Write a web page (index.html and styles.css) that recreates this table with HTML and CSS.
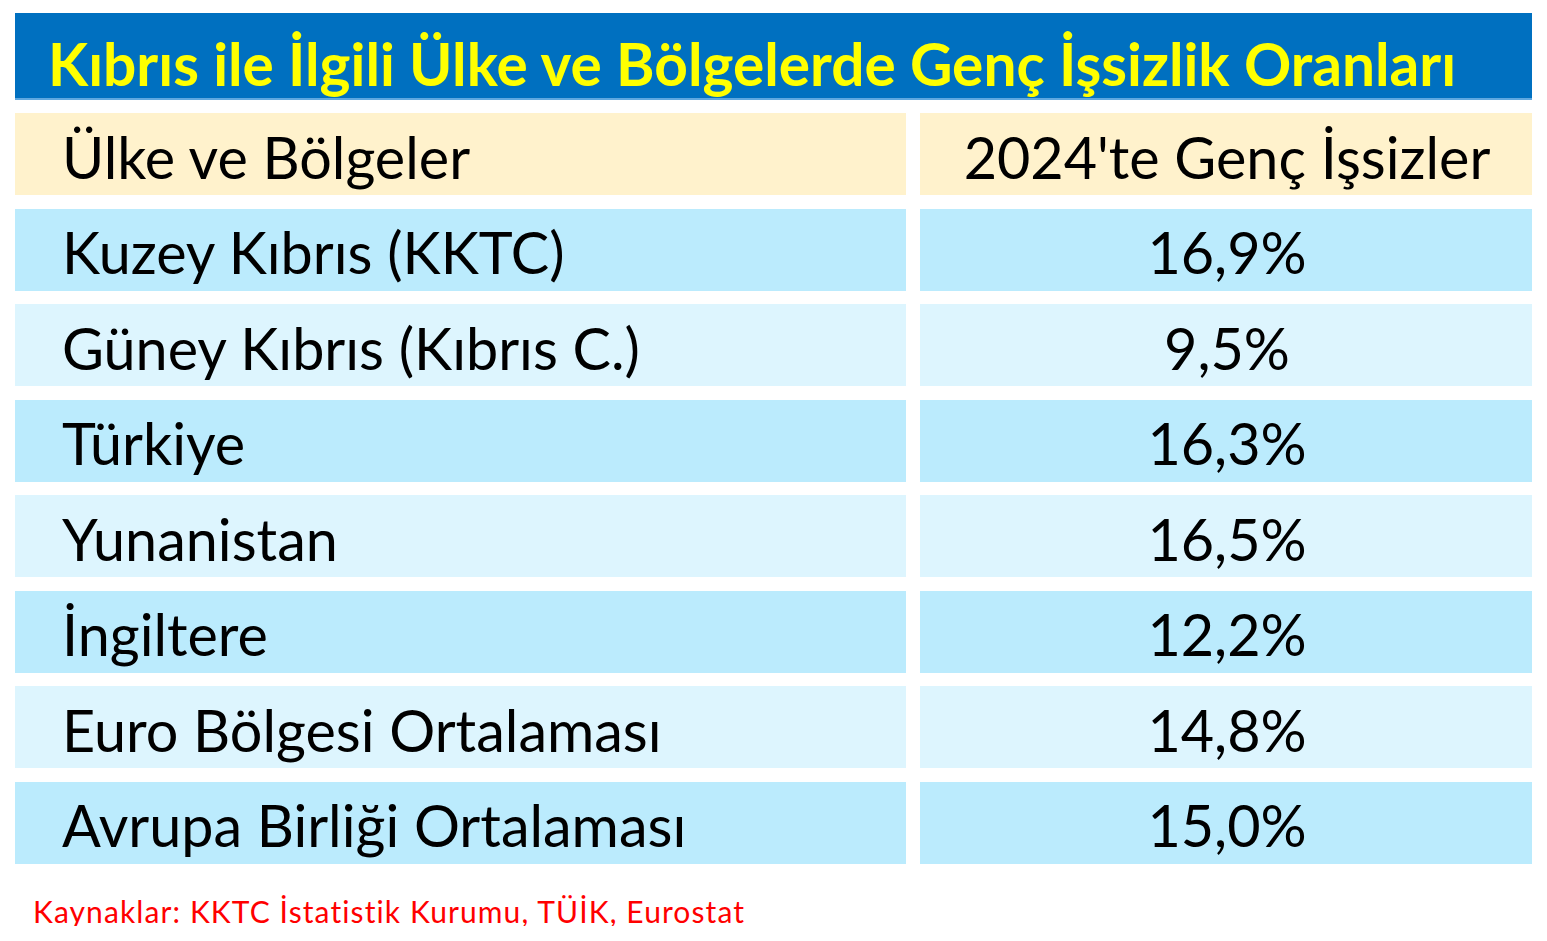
FILE: index.html
```html
<!DOCTYPE html>
<html lang="tr">
<head>
<meta charset="utf-8">
<title>Genç İşsizlik Oranları</title>
<link rel="stylesheet" href="styles.css">
</head>
<body>
<main class="sheet">
  <h1 class="title">Kıbrıs ile İlgili Ülke ve Bölgelerde Genç İşsizlik Oranları</h1>
  <div class="table">
    <div class="cell head name">Ülke ve Bölgeler</div>
    <div class="cell head value">2024'te Genç İşsizler</div>

    <div class="cell dark name">Kuzey Kıbrıs (KKTC)</div>
    <div class="cell dark value">16,9%</div>

    <div class="cell light name">Güney Kıbrıs (Kıbrıs C.)</div>
    <div class="cell light value">9,5%</div>

    <div class="cell dark name">Türkiye</div>
    <div class="cell dark value">16,3%</div>

    <div class="cell light name">Yunanistan</div>
    <div class="cell light value">16,5%</div>

    <div class="cell dark name">İngiltere</div>
    <div class="cell dark value">12,2%</div>

    <div class="cell light name">Euro Bölgesi Ortalaması</div>
    <div class="cell light value">14,8%</div>

    <div class="cell dark name">Avrupa Birliği Ortalaması</div>
    <div class="cell dark value">15,0%</div>
  </div>
  <p class="source">Kaynaklar: KKTC İstatistik Kurumu, TÜİK, Eurostat</p>
</main>
</body>
</html>
```

FILE: styles.css
```css
* { box-sizing: border-box; }
html, body { margin: 0; padding: 0; background: #ffffff; }
body {
  font-family: Lato, "Noto Sans", "DejaVu Sans", sans-serif;
  color: #000;
}
.sheet {
  width: 1547px;
  padding: 13px 15px 0 15px;
}
.title {
  margin: 0;
  height: 87px;
  background: #0070c0;
  border-bottom: 2px solid #5fa8e0;
  color: #ffff00;
  font-weight: 700;
  font-size: 58.6px;
  line-height: 85px;
  padding-top: 8px;
  padding-left: 33px;
  white-space: nowrap;
  overflow: hidden;
}
.table {
  margin-top: 13px;
  display: grid;
  grid-template-columns: 891px 612px;
  column-gap: 14px;
  row-gap: 13.5px;
  grid-auto-rows: 82px;
}
.cell {
  display: flex;
  align-items: center;
  font-size: 57.5px;
  line-height: 1;
  padding-top: 5px;
  white-space: nowrap;
}
.name { padding-left: 47px; }
.value { justify-content: center; padding-left: 2px; }
.head { background: #fff2cc; }
.dark { background: #bbebfd; }
.light { background: #ddf5fe; }
.source {
  margin: 32px 0 0 18px;
  color: #ff0000;
  font-size: 30px;
  letter-spacing: 1.1px;
  line-height: 1;
}
```
